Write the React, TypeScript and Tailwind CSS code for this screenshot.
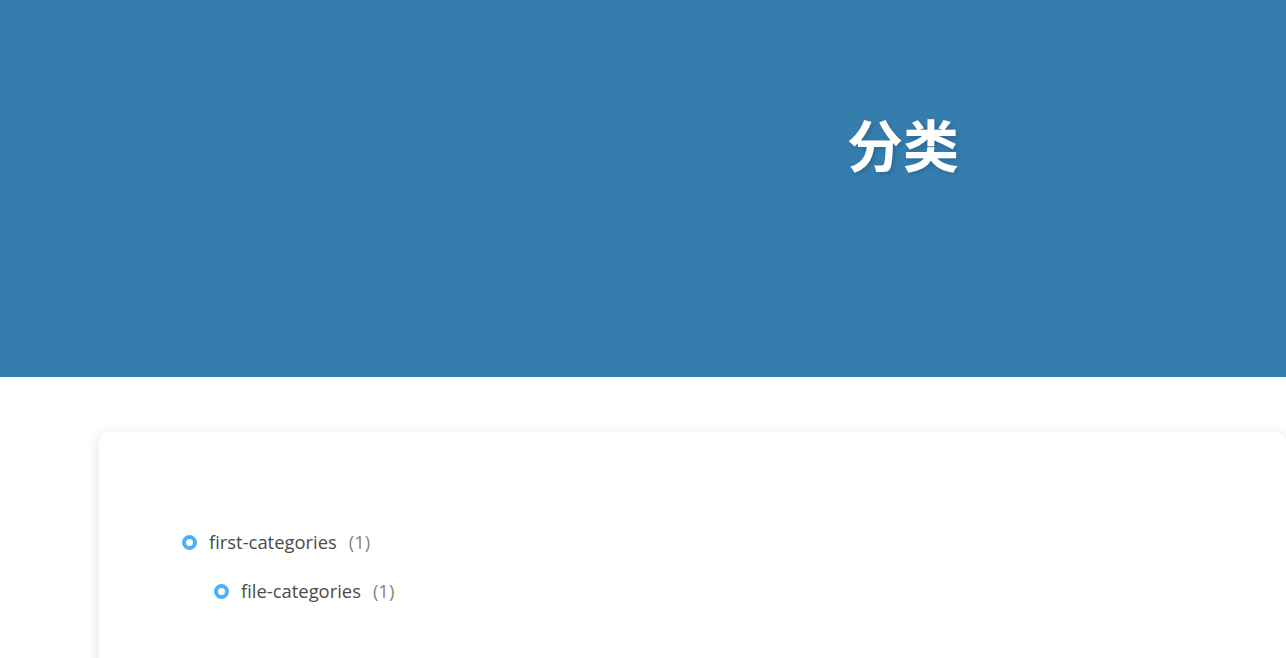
export default function App() {
  return (
    <div className="w-full h-[658px] overflow-hidden bg-white" style={{ fontFamily: '"Open Sans", "Noto Sans CJK SC", sans-serif' }}>
      <header className="h-[377px] bg-[#347dad] flex items-start justify-center pl-[520px] pt-[103px]">
        <h1
          className="text-[56px] leading-[80px] font-bold text-white [text-shadow:2px_2px_4px_rgba(0,0,0,0.15)]"
          style={{ fontFamily: '"Noto Sans CJK SC", sans-serif' }}
        >
          分类
        </h1>
      </header>

      <main className="pt-[55px] pl-[99px]">
        <div className="rounded-[10px] bg-white shadow-[0_3px_8px_6px_rgba(7,17,27,0.05)] pt-[98px] pb-[60px] pl-[83px] pr-[82px] min-h-[300px]">
          <ul className="text-[18.4px] text-[#4c4948]">
            <li className="flex items-center gap-[12px] h-[24px]">
              <span className="w-[15px] h-[15px] rounded-full border-[4px] border-[#49b1f5]" />
              <span>first-categories</span>
              <span className="text-[#858585]">(1)</span>
            </li>
            <ul className="pl-[32px] mt-[25px]">
              <li className="flex items-center gap-[12px] h-[24px]">
                <span className="w-[15px] h-[15px] rounded-full border-[4px] border-[#49b1f5]" />
                <span>file-categories</span>
                <span className="text-[#858585]">(1)</span>
              </li>
            </ul>
          </ul>
        </div>
      </main>
    </div>
  )
}
